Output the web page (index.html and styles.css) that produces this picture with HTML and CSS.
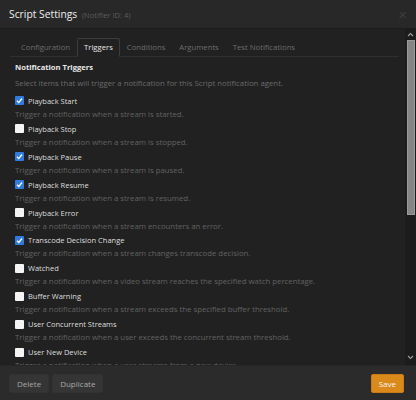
FILE: index.html
```html
<!DOCTYPE html>
<html lang="en">
<head>
    <meta charset="UTF-8">
    <meta name="viewport" content="width=device-width, initial-scale=1.0">
    <title>Script Settings</title>
    <link rel="stylesheet" href="styles.css">
</head>
<body>
    <div class="modal">
        <div class="modal-header">
            <h4>Script Settings <small>(Notifier ID: 4)</small></h4>
            <button class="close">&times;</button>
        </div>

        <div class="modal-body">
            <div class="scroll-area">
                <ul class="nav-tabs">
                    <li>Configuration</li>
                    <li class="active">Triggers</li>
                    <li>Conditions</li>
                    <li>Arguments</li>
                    <li>Test Notifications</li>
                </ul>

                <div class="tab-content">
                    <h5>Notification Triggers</h5>
                    <p class="help intro">Select items that will trigger a notification for this Script notification agent.</p>

                    <div class="trigger">
                        <label><input type="checkbox" checked> Playback Start</label>
                        <p class="help">Trigger a notification when a stream is started.</p>
                    </div>
                    <div class="trigger">
                        <label><input type="checkbox"> Playback Stop</label>
                        <p class="help">Trigger a notification when a stream is stopped.</p>
                    </div>
                    <div class="trigger">
                        <label><input type="checkbox" checked> Playback Pause</label>
                        <p class="help">Trigger a notification when a stream is paused.</p>
                    </div>
                    <div class="trigger">
                        <label><input type="checkbox" checked> Playback Resume</label>
                        <p class="help">Trigger a notification when a stream is resumed.</p>
                    </div>
                    <div class="trigger">
                        <label><input type="checkbox"> Playback Error</label>
                        <p class="help">Trigger a notification when a stream encounters an error.</p>
                    </div>
                    <div class="trigger">
                        <label><input type="checkbox" checked> Transcode Decision Change</label>
                        <p class="help">Trigger a notification when a stream changes transcode decision.</p>
                    </div>
                    <div class="trigger">
                        <label><input type="checkbox"> Watched</label>
                        <p class="help">Trigger a notification when a video stream reaches the specified watch percentage.</p>
                    </div>
                    <div class="trigger">
                        <label><input type="checkbox"> Buffer Warning</label>
                        <p class="help">Trigger a notification when a stream exceeds the specified buffer threshold.</p>
                    </div>
                    <div class="trigger">
                        <label><input type="checkbox"> User Concurrent Streams</label>
                        <p class="help">Trigger a notification when a user exceeds the concurrent stream threshold.</p>
                    </div>
                    <div class="trigger">
                        <label><input type="checkbox"> User New Device</label>
                        <p class="help">Trigger a notification when a user streams from a new device.</p>
                    </div>
                </div>
            </div>

            <div class="scrollbar">
                <span class="arrow up"></span>
                <span class="thumb"></span>
                <span class="arrow down"></span>
            </div>
        </div>

        <div class="modal-footer">
            <button class="btn">Delete</button>
            <button class="btn">Duplicate</button>
            <button class="btn btn-bright">Save</button>
        </div>
    </div>
</body>
</html>
```

FILE: styles.css
```css
body {
    margin: 0;
    padding: 0;
    background: #212121;
    font-family: "Open Sans", Arial, sans-serif;
    color: #e0e0e0;
}
.modal {
    display: flex;
    flex-direction: column;
    height: 400px;
}
.modal-header {
    height: 29px;
    flex: none;
    display: flex;
    align-items: center;
    justify-content: space-between;
    padding: 0 9px;
    box-sizing: border-box;
    background: #282828;
    border-bottom: 1px solid #1c1c1c;
}
.modal-header h4 {
    margin: 0;
    font-size: 10.3px;
    font-weight: 400;
    color: #eee;
}
.modal-header small {
    font-size: 7.5px;
    color: #5c5c5c;
    margin-left: 2px;
}
.close {
    background: none;
    border: none;
    padding: 0;
    color: #3e3e3e;
    font-size: 15px;
    line-height: 1;
    font-family: Arial, sans-serif;
}
.modal-body {
    flex: 1;
    min-height: 0;
    display: flex;
    background: #212121;
}
.scroll-area {
    flex: 1;
    overflow: hidden;
    padding: 9px 6px 0 10px;
}
.scrollbar {
    flex: none;
    width: 11px;
    display: flex;
    flex-direction: column;
    align-items: center;
    background: #1c1c1c;
}
.arrow {
    height: 10px;
    width: 7px;
    flex: none;
    background-repeat: no-repeat;
    background-position: center;
}
.arrow.up {
    background-image: url("data:image/svg+xml,%3Csvg xmlns='http://www.w3.org/2000/svg' width='7' height='5'%3E%3Cpath d='M1 4 L3.5 1.5 L6 4' fill='none' stroke='%23999' stroke-width='1.2'/%3E%3C/svg%3E");
}
.arrow.down {
    margin-top: auto;
    margin-bottom: 3px;
    background-image: url("data:image/svg+xml,%3Csvg xmlns='http://www.w3.org/2000/svg' width='7' height='5'%3E%3Cpath d='M1 1 L3.5 3.5 L6 1' fill='none' stroke='%23999' stroke-width='1.2'/%3E%3C/svg%3E");
}
.thumb {
    margin-top: 1px;
    width: 8px;
    height: 175px;
    box-sizing: border-box;
    background: #858585;
    border: 1px solid #9a9a9a;
}
.nav-tabs {
    list-style: none;
    margin: 0;
    padding: 0 0 0 4px;
    display: flex;
    border-bottom: 1px solid #2f2f2f;
}
.nav-tabs li {
    font-size: 7.7px;
    line-height: 17px;
    padding: 0 6px;
    margin-bottom: -1px;
    color: #6c6c6c;
    border: 1px solid transparent;
    border-radius: 2px 2px 0 0;
}
.nav-tabs li.active {
    color: #e6e6e6;
    background: #212121;
    border-color: #3c3c3c #3c3c3c #212121;
}
.tab-content {
    padding: 2px 0 10px 5px;
}
.tab-content h5 {
    margin: 0;
    font-size: 7.6px;
    font-weight: 700;
    line-height: 16px;
    color: #e8e8e8;
}
.help {
    margin: 0;
    font-size: 7.8px;
    line-height: 13.9px;
    color: #626262;
}
.intro {
    margin: 2px 0 3px;
    color: #6a6a6a;
}
.trigger label {
    display: flex;
    align-items: center;
    gap: 4px;
    font-size: 7.5px;
    font-weight: 400;
    line-height: 14px;
    color: #dedede;
}
.trigger input {
    appearance: none;
    margin: 0;
    width: 9px;
    height: 9px;
    background: #f4f4f4;
    border-radius: 1px;
}
.trigger input:checked {
    background: #2f7be0 url("data:image/svg+xml,%3Csvg xmlns='http://www.w3.org/2000/svg' width='9' height='9'%3E%3Cpath d='M2 4.8 L3.8 6.5 L7 2.5' fill='none' stroke='%23fff' stroke-width='1.3'/%3E%3C/svg%3E") no-repeat center;
}
.modal-footer {
    flex: none;
    height: 35px;
    box-sizing: border-box;
    display: flex;
    align-items: center;
    gap: 3px;
    padding: 0 12px 0 9px;
    background: #2b2b2b;
    border-top: 1px solid #262626;
}
.btn {
    height: 19px;
    padding: 0 7px;
    border: 1px solid #323232;
    border-radius: 2px;
    background: #353535;
    color: #a8a8a8;
    font-family: "Open Sans", Arial, sans-serif;
    font-size: 8px;
}
.btn-bright {
    margin-left: auto;
    background: #d98a1b;
    border-color: #c97c15;
    color: #f5f5f5;
}
```
